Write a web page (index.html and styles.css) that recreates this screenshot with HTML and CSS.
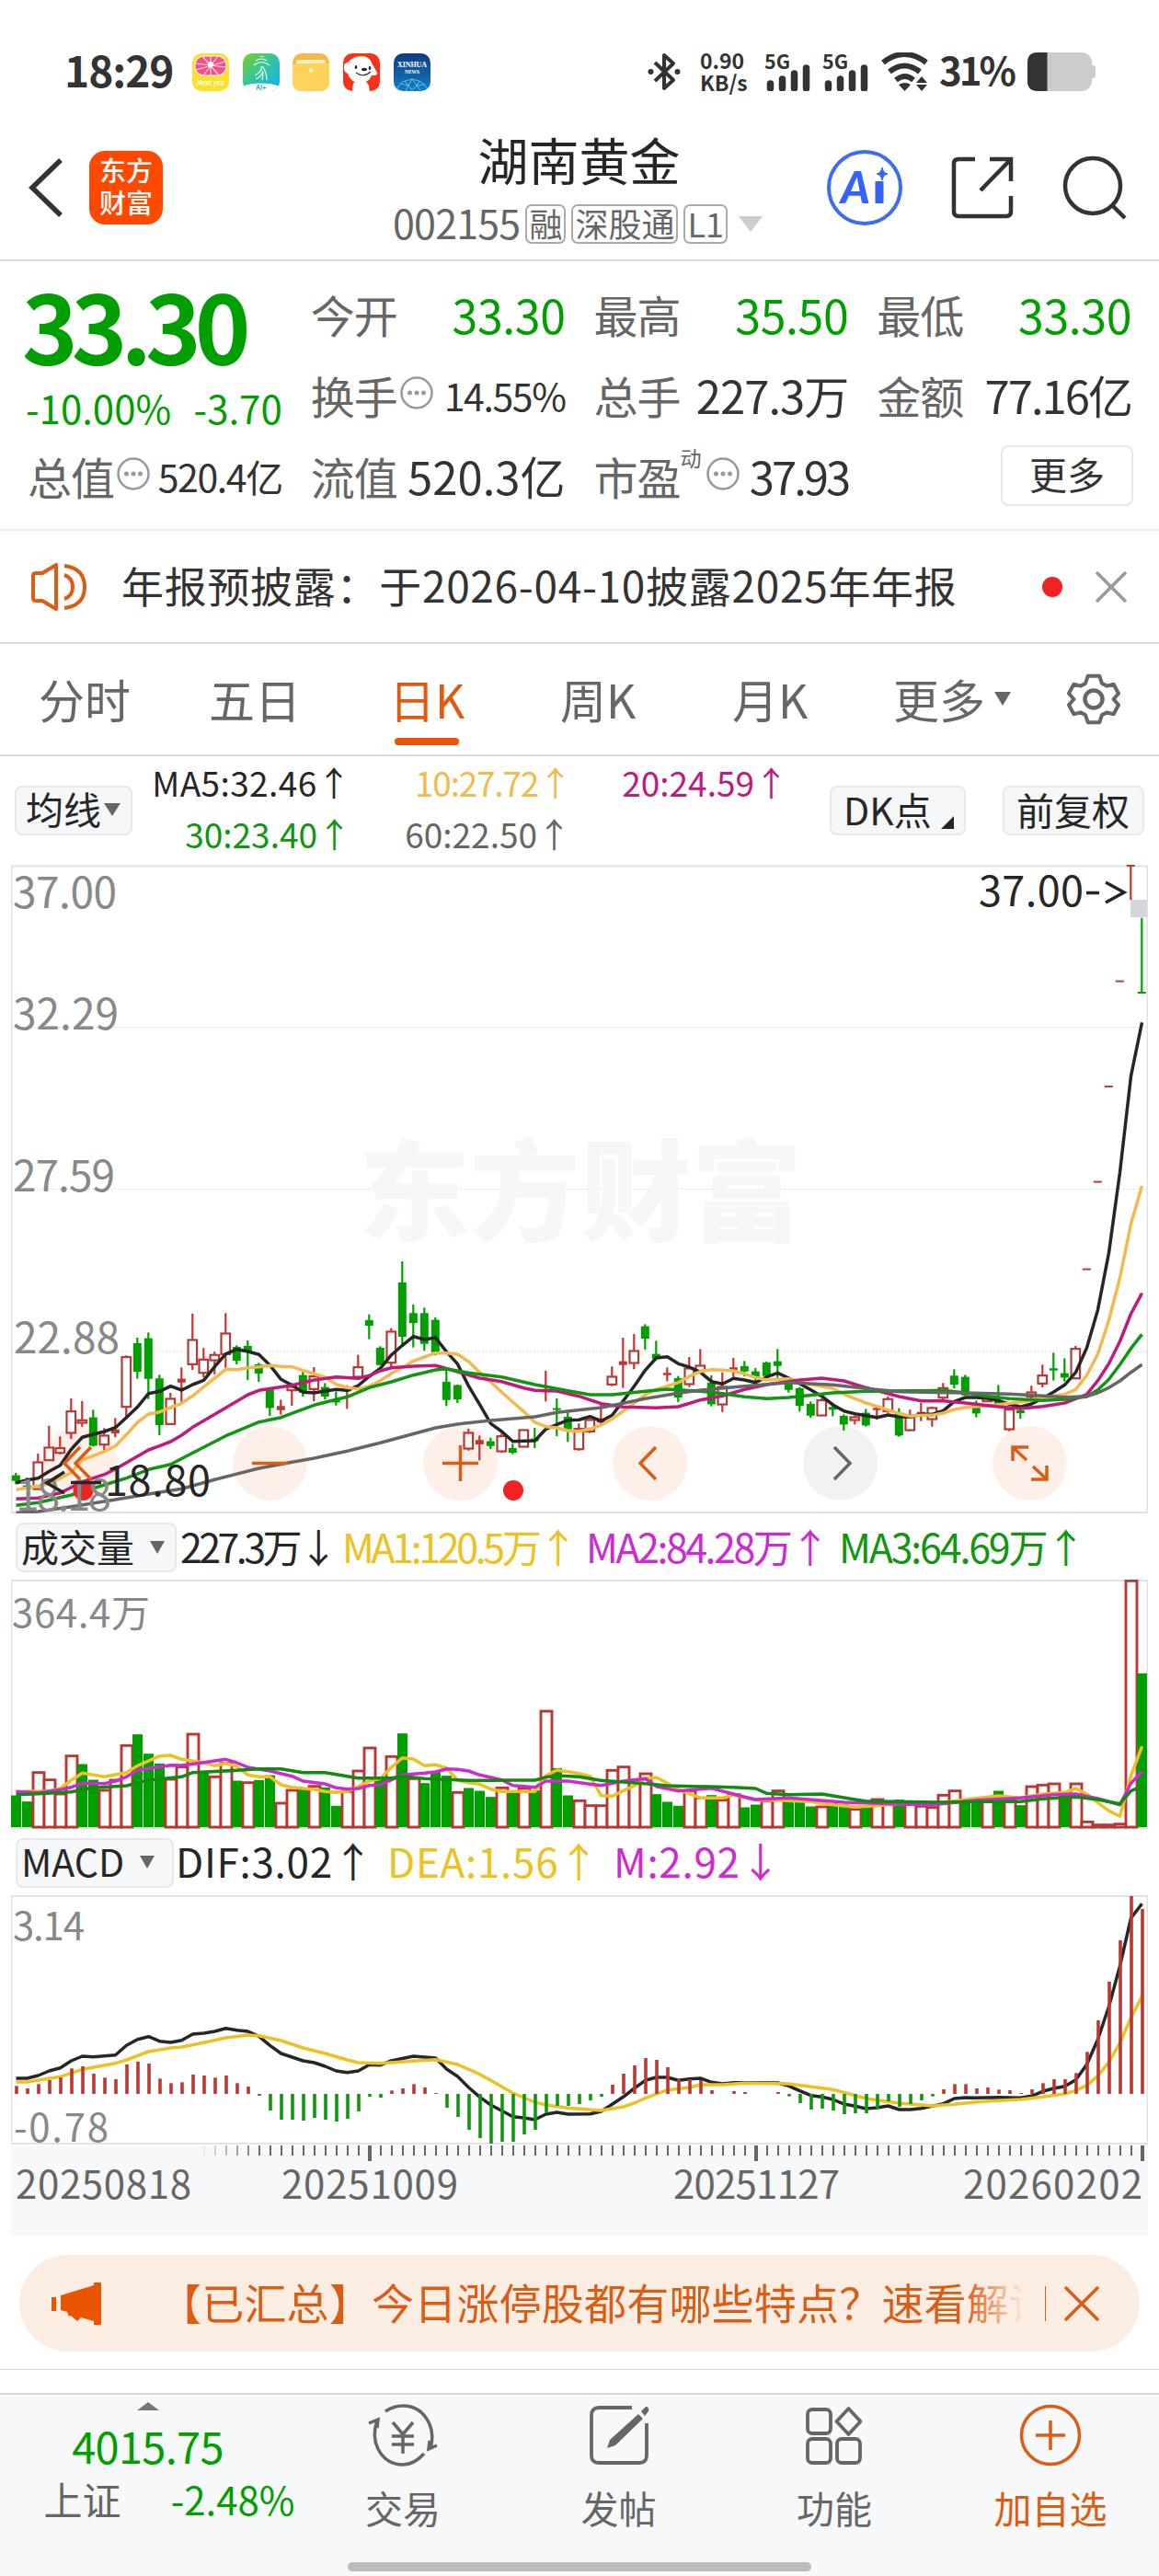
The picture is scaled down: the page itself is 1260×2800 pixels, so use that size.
FILE: index.html
```html
<!DOCTYPE html>
<html lang="zh-CN">
  <head>
    <meta charset="UTF-8" />
    <meta name="viewport" content="width=device-width, initial-scale=1" />
    <title>湖南黄金 002155</title>
    <link rel="stylesheet" href="styles.css">
    <script src="main.js" defer></script>
  </head>
  <body>
    <div class="status">
      <span class="clock">18:29</span>
      <div class="apps">
        <svg viewBox="0 0 40 41"><rect width="40" height="41" rx="10" fill="#fde02a"/><rect x="2.500" y="2.500" width="35" height="22" rx="10" fill="#fff"/><rect x="3.500" y="3.500" width="33" height="20" rx="9" fill="#f4508a"/><path d="M20 3v21M4 11l32 4M36 9L4 18M11 3l18 21M28 3L12 24" stroke="#fbd6e2" stroke-width="1.200"/><circle cx="20" cy="12" r="3" fill="#fff"/><text x="5" y="34.500" font-size="7.500" font-weight="500" fill="#fff" textLength="30" lengthAdjust="spacingAndGlyphs">Meet you</text></svg>
        <svg viewBox="0 0 40 41"><defs><linearGradient id="g1" x1="0" y1="0" x2="1" y2="1"><stop offset="0" stop-color="#7ccd2c"/><stop offset=".5" stop-color="#34c3a4"/><stop offset="1" stop-color="#0db1f2"/></linearGradient><clipPath id="c1"><rect width="40" height="41" rx="10"/></clipPath></defs><g clip-path="url(#c1)"><rect width="40" height="41" fill="url(#g1)"/><path d="M19 3.500h4M14 8q6-4 12 0M12 13q8-7 17 0M13 24q8-4 7-9 1-1 2 0 4 6 4 14M14 28q6-2 8-9M22 21q0 4-1 8" fill="none" stroke="#e2fff0" stroke-width="1.200"/><ellipse cx="20" cy="40" rx="24" ry="7.500" fill="#fff"/></g><text x="20" y="39.500" font-size="7.500" font-weight="500" fill="#0a97bd" text-anchor="middle">AI+</text></svg>
        <svg viewBox="0 0 40 41"><rect width="40" height="41" rx="10" fill="#f4ba45"/><path d="M4 13V10q0-3 3-3h26q3 0 3 3v3z" fill="#fdf0c8"/><path d="M0 11h40v20q0 10-10 10H10Q0 41 0 31z" fill="#ffd35a"/><circle cx="20" cy="18.500" r="2.200" fill="#fff5c8"/></svg>
        <svg viewBox="0 0 40 41"><rect width="40" height="41" rx="10" fill="#f83216"/><path d="M1 13q1-3 4-3 6-7 15-7 9 0 12 9l5 9q0 3-3 3h-3q-3 8-12 8-11 0-14-10-5-2-4-9z" fill="#fff"/><path d="M10 41q0-9 3-10h12q3 2 4 10z" fill="#fff"/><ellipse cx="14" cy="15" rx="1.300" ry="2" fill="#222"/><ellipse cx="29" cy="16" rx="1.300" ry="2" fill="#222"/><ellipse cx="23" cy="17.500" rx="3" ry="1.700" fill="#222"/><path d="M14 21q8 6 16-1" fill="none" stroke="#333" stroke-width="1.100"/></svg>
        <svg viewBox="0 0 40 41"><defs><linearGradient id="g2" x1="0" y1="0" x2="0" y2="1"><stop offset="0" stop-color="#123a80"/><stop offset="1" stop-color="#0f7fc4"/></linearGradient></defs><rect width="40" height="41" rx="10" fill="url(#g2)"/><text class="serif" x="4" y="15" font-size="8" font-weight="700" fill="#fff" textLength="32">XINHUA</text><text class="serif" x="12" y="22" font-size="5.500" font-weight="700" fill="#fff" textLength="16">NEWS</text><path d="M3 40q3-8 9-10l8-2 8 2q6 3 9 9M8 33l8 2 4-7 5 7 8-1M12 30l4 5-3 6M28 30l-3 5 4 5M16 35l4 5 5-5" fill="none" stroke="#7fd0f5" stroke-width=".8"/></svg>
      </div>
      <div class="signals">
        <svg class="bt" viewBox="0 0 36 42"><path d="M8 11l20 19-10 9V3l10 9L8 31" fill="none" stroke="#333" stroke-width="4" stroke-linejoin="round"/><circle cx="3.500" cy="21" r="3" fill="#333"/><circle cx="32.500" cy="21" r="3" fill="#333"/></svg>
        <div class="rate"><span>0.90</span><span>KB/s</span></div>
        <svg class="cell" viewBox="0 0 50 41"><text x="0" y="16.500" font-size="21" font-weight="700" fill="#333" textLength="28" lengthAdjust="spacingAndGlyphs">5G</text><path d="M6.500 33v5M19.500 28v10M32.500 22v16M45.500 16v22" stroke="#333" stroke-width="7.500" stroke-linecap="round"/></svg>
        <svg class="cell" viewBox="0 0 50 41"><text x="0" y="16.500" font-size="21" font-weight="700" fill="#333" textLength="28" lengthAdjust="spacingAndGlyphs">5G</text><path d="M6.500 33v5M19.500 28v10M32.500 22v16M45.500 16v22" stroke="#333" stroke-width="7.500" stroke-linecap="round"/></svg>
        <svg class="wifi" viewBox="0 0 54 42"><path d="M3 11q23-18 47 0M10 21q16-13 33 0M17 30q10-8 19 0" fill="none" stroke="#333" stroke-width="6"/><path d="M20 35q7-4 13 0l-6.500 7zM39 33l6-7 6 7zM39 35h12l-6 7z" fill="#333"/></svg>
        <span class="percent">31%</span>
        <svg class="battery" viewBox="0 0 74 42"><rect width="70" height="42" rx="11" fill="#ccc"/><path d="M70 14h1q3 0 3 3v8q0 3-3 3h-1z" fill="#ccc"/><path d="M11 0h10.500v42H11Q0 42 0 31V11Q0 0 11 0z" fill="#333"/></svg>
      </div>
    </div>

    <header class="header">
      <div class="header-left">
        <svg class="back" viewBox="0 0 38 64"><path d="M35 2L4 32l31 30" fill="none" stroke="#333" stroke-width="5.500"/></svg>
        <div class="logo">东方<br />财富</div>
      </div>
      <div class="header-title">
        <h1>湖南黄金</h1>
        <div class="code"><span>002155</span><i>融</i><i>深股通</i><i>L1</i><b></b></div>
      </div>
      <div class="header-right">
        <svg width="82" height="84" viewBox="0 0 82 84"><circle cx="41" cy="42" r="39" fill="#fff" stroke="#3d6cf0" stroke-width="4"/><text class="ai" x="15" y="59" font-size="48" fill="#3264fa" textLength="32" lengthAdjust="spacingAndGlyphs">A</text><path d="M57 35v24" stroke="#3264fa" stroke-width="9"/><path d="M60 20q1 6 6 7-5 1-6 7-1-6-6-7 5-1 6-7z" fill="#3264fa" stroke="#3264fa"/></svg>
        <svg width="68" height="68" viewBox="0 0 68 68"><path d="M26 3H8Q3 3 3 8v52q0 5 5 5h52q5 0 5-5V43M42 3h23v24M65 3L32 37" fill="none" stroke="#333" stroke-width="4.500"/></svg>
        <svg width="70" height="70" viewBox="0 0 70 70"><circle cx="33" cy="33" r="30" fill="none" stroke="#333" stroke-width="4.500"/><path d="M54 54l14 14" stroke="#333" stroke-width="4.500"/></svg>
      </div>
    </header>

    <section class="quote">
      <div class="price">
        <strong>33.30</strong>
        <p><span>-10.00%</span><span>-3.70</span></p>
      </div>
      <div class="cell-q"><label>今开</label><span class="down">33.30</span></div>
      <div class="cell-q"><label>最高</label><span class="down">35.50</span></div>
      <div class="cell-q"><label>最低</label><span class="down">33.30</span></div>
      <div class="cell-q"><label>换手<svg class="more-dot" viewBox="0 0 36 36"><use href="#dots"/></svg></label><span class="small">14.55%</span></div>
      <div class="cell-q"><label>总手</label><span>227.3万</span></div>
      <div class="cell-q"><label>金额</label><span class="amount">77.16亿</span></div>
      <div class="cell-q"><label>总值<svg class="more-dot" viewBox="0 0 36 36"><use href="#dots"/></svg></label><span class="small">520.4亿</span></div>
      <div class="cell-q"><label>流值</label><span class="wide">520.3亿</span></div>
      <div class="cell-q"><label>市盈<sup>动</sup><svg class="more-dot" viewBox="0 0 36 36"><use href="#dots"/></svg></label><span class="ratio">37.93</span></div>
      <div class="cell-q end"><a class="more">更多</a></div>
    </section>

    <section class="notice">
      <svg class="speaker" viewBox="0 0 62 52"><path d="M27 2v48L12 41H5q-3 0-3-3V14q0-3 3-3h7z" fill="none" stroke="#dc5c14" stroke-width="4" stroke-linejoin="round"/><path d="M36 13q9 3 9 13t-9 13M36 3q22 3 22 23T36 49" fill="none" stroke="#dc5c14" stroke-width="4"/></svg>
      <p>年报预披露：于2026-04-10披露2025年年报</p>
      <i class="dot"></i>
      <svg class="close" viewBox="0 0 34 34"><path d="M1 1l32 32M33 1L1 33" stroke="#999" stroke-width="3.500"/></svg>
    </section>

    <nav class="tabs">
      <a>分时</a>
      <a>五日</a>
      <a class="active">日K</a>
      <a>周K</a>
      <a>月K</a>
      <a>更多<b></b></a>
      <svg class="gear" viewBox="0 0 60 60"><path d="M23 2h14l3 9 6 3 8-2 6 11-6 7 6 7-6 11-8-2-6 3-3 9H23l-3-9-6-3-8 2-6-11 6-7-6-7 6-11 8 2 6-3z" transform="translate(3 3) scale(.9)" fill="none" stroke="#666" stroke-width="4.500" stroke-linejoin="round"/><circle cx="30" cy="30" r="9.500" fill="none" stroke="#666" stroke-width="4.500"/></svg>
    </nav>

    <section class="ma">
      <a class="chip ma-chip">均线<b></b></a>
      <div class="ma-values">
        <span class="c-dark ma5">MA5:32.46↑</span><span class="c-orange ma10">10:27.72↑</span><span class="c-pink">20:24.59↑</span>
        <span class="c-green">30:23.40↑</span><span class="c-gray">60:22.50↑</span>
      </div>
      <a class="chip dk-chip">DK点<b></b></a>
      <a class="chip fq-chip">前复权</a>
    </section>

    <svg class="chart kline" viewBox="12 940 1236 705">
      <g class="frame">
        <path d="M12.500 941.500H1247.500V1644H12.500z" />
        <path class="dash" d="M12 1116.500H1247M12 1292.500H1247M12 1469H1247" />
      </g>
      <text class="watermark" x="390" y="1340" textLength="482" lengthAdjust="spacingAndGlyphs">东方财富</text>
      <g class="buttons">
        <circle cx="87.500" cy="1590.500" r="40.500"/><circle cx="293.500" cy="1590.500" r="40.500"/><circle cx="500.500" cy="1590.500" r="40.500"/><circle cx="706.500" cy="1590.500" r="40.500"/><circle class="off" cx="913.500" cy="1590.500" r="40.500"/><circle cx="1119.500" cy="1590.500" r="40.500"/>
      </g>
      <g id="kline"></g>
      <g class="button-icons">
        <path d="M87 1573l-17 17.500 17 17.500M99 1573l-17 17.500 17 17.500M274 1590.500h39M481 1590.500h39M500.500 1571v39M713 1573l-17 17.500 17 17.500"/>
        <path class="off" d="M907 1573l17 17.500-17 17.500"/>
        <path d="M1101 1588v-15h17M1102 1574l14 13M1138 1593v15h-17M1137 1607l-14-13"/>
      </g>
      <circle cx="90.500" cy="1620" r="11" fill="#f02222"/>
      <circle cx="558" cy="1620" r="11" fill="#f02222"/>
      <rect x="1229" y="978" width="18" height="19" fill="#d3d6da"/>
      <g class="axis">
        <text x="14" y="987" textLength="113">37.00</text>
        <text x="14" y="1119" textLength="115">32.29</text>
        <text x="14" y="1295" textLength="111">27.59</text>
        <text x="15" y="1471" textLength="115">22.88</text>
        <text x="17" y="1642" textLength="104">18.18</text>
      </g>
      <path d="M70 1600l-19 12 19 11M77 1611.500h33" fill="none" stroke="#262626" stroke-width="3.500"/>
      <text class="mark" x="114" y="1626" textLength="115">18.80</text>
      <text class="mark" x="1064" y="985" textLength="114">37.00</text>
      <path d="M1181 970.500h14M1202 959l20 11-20 11" fill="none" stroke="#262626" stroke-width="3.500"/>
    </svg>

    <section class="indicator volume-row">
      <a class="chip">成交量<b></b></a>
      <span class="c-dark">227.3万↓</span><span class="c-yellow">MA1:120.5万↑</span><span class="c-magenta">MA2:84.28万↑</span><span class="c-green">MA3:64.69万↑</span>
    </section>

    <svg class="chart volume" viewBox="12 1717 1236 271">
      <g class="frame"><path d="M12.500 1718H1247.500V1987H12.500z" /></g>
      <g id="volume"></g>
      <g class="axis"><text x="13" y="1769" font-size="42" textLength="150">364.4万</text></g>
    </svg>

    <section class="indicator macd-row">
      <a class="chip">MACD<b></b></a>
      <span class="c-dark">DIF:3.02↑</span><span class="c-yellow">DEA:1.56↑</span><span class="c-magenta">M:2.92↓</span>
    </section>

    <svg class="chart macd" viewBox="12 2060 1236 370">
      <rect x="12" y="2332" width="1236" height="98" fill="#f7f8fa" />
      <g class="frame"><path d="M12.500 2061H1247.500V2330H12.500z" /></g>
      <g id="macd"></g>
      <g class="axis">
        <text x="14" y="2109" font-size="42" textLength="78">3.14</text>
        <text x="15" y="2328" font-size="42" textLength="103">-0.78</text>
      </g>
      <g class="dates">
        <text x="17" y="2390" textLength="191">20250818</text>
        <text x="306" y="2390" textLength="192">20251009</text>
        <text x="732" y="2390" textLength="181">20251127</text>
        <text x="1047" y="2390" textLength="195">20260202</text>
      </g>
    </svg>

    <div class="banner">
      <svg class="horn" viewBox="0 0 54 46"><path d="M0 16h5v15H0zM10 14L46 3V0h8v46h-8v-4l-14-4-4 4-7-6-2 1-2-5-7-2z" fill="#ea5504"/></svg>
      <p>【已汇总】今日涨停股都有哪些特点？速看解读</p>
      <svg class="banner-close" viewBox="0 0 38 38"><path d="M1 1l36 36M37 1L1 37" stroke="#dc5c14" stroke-width="3.500"/></svg>
    </div>

    <footer class="bottom">
      <div class="index">
        <b></b>
        <strong>4015.75</strong>
        <p><span>上证</span><em>-2.48%</em></p>
      </div>
      <a><svg viewBox="0 0 76 68"><g fill="none" stroke="#666" stroke-width="3.500"><path d="M19 8Q28 2 38 2q20 0 29 20 5 12 1 27M61 54Q50 66 38 66 20 66 11 49 4 35 10 18M1 21l10-4-1 9M67 40l-1 9 9-4M27 20l11 13 11-13M26 35h24M26 44h24M38 33v21"/></g></svg>交易</a>
      <a><svg viewBox="0 0 68 68"><g fill="none" stroke="#666" stroke-width="3.800"><path d="M48 4H12q-8 0-8 8v44q0 8 8 8h44q8 0 8-8V21"/></g><path d="M55 11l5 5-30 29-9 3 3-9zM58 8l5-5q4 0 3 5l-4 5z" fill="#666"/></svg>发帖</a>
      <a><svg viewBox="0 0 66 68"><g fill="none" stroke="#666" stroke-width="3.800"><rect x="4" y="6" width="25" height="26" rx="5"/><rect x="4" y="38" width="25" height="26" rx="5"/><rect x="36" y="38" width="25" height="26" rx="5"/><path d="M48.500 5l13 14-13 14-13-14z" stroke-linejoin="round"/></g></svg>功能</a>
      <a class="add"><svg viewBox="0 0 68 68"><g fill="none" stroke="#dc5c14" stroke-width="3.500"><circle cx="34" cy="34" r="31.500"/><path d="M18 34h32M34 18v32"/></g></svg>加自选</a>
      <i class="home"></i>
    </footer>

    <svg class="defs">
      <symbol id="dots" viewBox="0 0 36 36"><circle cx="18" cy="18" r="16.500" fill="none" stroke="#999" stroke-width="2.500"/><circle cx="10.500" cy="18" r="2.500" fill="#999"/><circle cx="18" cy="18" r="2.500" fill="#999"/><circle cx="25.500" cy="18" r="2.500" fill="#999"/></symbol>
    </svg>
  </body>
</html>
```
FILE: styles.css
```css
* {
  box-sizing: border-box;
}
body {
  margin: 0;
  width: 1260px;
  background: #fff;
  color: #333;
  font-family: "Noto Sans CJK SC", "Noto Sans", sans-serif;
}
svg {
  display: block;
}
p, h1 {
  margin: 0;
  font-weight: 400;
}
i, em {
  font-style: normal;
}
.serif {
  font-family: "Liberation Serif", serif;
}
.defs {
  width: 0;
  height: 0;
}

/* status bar */
.status {
  display: flex;
  align-items: center;
  height: 126px;
  padding: 30px 69px 0 70px;
}
.clock {
  width: 139px;
  font-size: 46px;
  font-weight: 700;
  line-height: 90px;
  letter-spacing: -1px;
  margin-top: -6px;
}
.apps {
  display: flex;
  gap: 14.7px;
}
.apps svg {
  width: 40px;
  height: 41px;
}
.signals {
  display: flex;
  align-items: center;
  margin-left: auto;
}
.bt {
  width: 36px;
  height: 42px;
}
.rate {
  display: flex;
  flex-direction: column;
  width: 54px;
  margin: -3px 16px 0 21px;
  font-size: 23px;
  font-weight: 700;
  line-height: 24px;
}
.cell {
  width: 50px;
  height: 41px;
  margin-right: 13px;
}
.wifi {
  width: 54px;
  height: 42px;
}
.percent {
  width: 83px;
  margin: -6px 13px 0 10px;
  font-size: 42px;
  font-weight: 700;
  line-height: 80px;
  letter-spacing: -3px;
}
.battery {
  width: 74px;
  height: 42px;
}

/* title bar */
.header {
  display: grid;
  grid-template-columns: 378px 500px 382px;
  height: 158px;
  border-bottom: 2px solid #ddd;
}
.header-left {
  display: flex;
  align-items: center;
  gap: 28px;
  padding-left: 31px;
}
.back {
  width: 38px;
  height: 64px;
}
.logo {
  width: 80px;
  height: 80px;
  padding-top: 3px;
  border-radius: 17px;
  background: #ff4800;
  color: #fff;
  font-size: 29px;
  font-weight: 500;
  line-height: 35px;
  text-align: center;
}
.header-title {
  text-align: center;
}
.header-title h1 {
  padding: 12px 0 0 3px;
  font-size: 55px;
  line-height: 68px;
  color: #262626;
}
.code {
  display: flex;
  align-items: center;
  justify-content: center;
  gap: 6px;
  height: 72px;
  margin-top: 1px;
  color: #666;
}
.code span {
  margin-top: -4px;
  font-size: 43px;
  line-height: 50px;
  letter-spacing: -0.8px;
}
.code i {
  height: 43px;
  padding: 0 2px;
  border: 2px solid #aaa;
  border-radius: 7px;
  font-size: 36px;
  line-height: 36px;
}
.code b {
  margin-left: 6px;
  border: 13px solid transparent;
  border-top: 17px solid #ccc;
  border-bottom: 0;
}
.header-right {
  display: flex;
  align-items: center;
  justify-content: flex-end;
  gap: 53px;
  padding-right: 35px;
}
.ai {
  font-family: Lato, sans-serif;
  font-weight: 900;
  font-style: italic;
}

/* quote */
.quote {
  display: grid;
  grid-template-columns: repeat(4, 1fr);
  grid-template-rows: 88px 88px 88px;
  column-gap: 31px;
  height: 293px;
  padding: 13px 30px 0;
  border-bottom: 2px solid #eee;
}
.price {
  grid-row: span 2;
  color: #009f00;
}
.price strong {
  display: block;
  font-size: 103px;
  line-height: 112px;
  letter-spacing: -7px;
  margin-left: -6px;
}
.price p {
  display: flex;
  justify-content: space-between;
  margin-left: -2px;
  font-size: 42px;
  line-height: 68px;
}
.cell-q {
  display: flex;
  align-items: center;
  justify-content: space-between;
  white-space: nowrap;
  font-size: 49px;
  line-height: 80px;
  letter-spacing: -1px;
}
.cell-q.end {
  justify-content: flex-end;
}
.cell-q label {
  display: flex;
  align-items: center;
  color: #666;
  font-size: 48px;
}
.cell-q .small {
  font-size: 41px;
  letter-spacing: -1.4px;
}
.cell-q .amount {
  letter-spacing: -2px;
}
.cell-q .wide {
  letter-spacing: 0;
}
.cell-q .ratio {
  letter-spacing: -3px;
}
.cell-q .down {
  font-size: 50px;
  letter-spacing: -0.4px;
  color: #009f00;
}
.more-dot {
  width: 36px;
  height: 36px;
  margin: -4px 0 0 3px;
}
.cell-q sup {
  align-self: flex-start;
  margin-top: -20px;
  width: 25px;
  font-size: 23px;
}
.more {
  width: 144px;
  height: 66px;
  margin: -1px -2px 0 0;
  border: 2px solid #e8e8e8;
  border-radius: 8px;
  font-size: 41px;
  line-height: 56px;
  letter-spacing: 0;
  text-align: center;
}

/* notice */
.notice {
  display: flex;
  align-items: center;
  height: 123px;
  padding: 0 35px 0 34px;
  border-bottom: 2px solid #ddd;
}
.speaker {
  width: 62px;
  height: 52px;
}
.notice p {
  width: 1001px;
  margin: -6px 0 0 36px;
  font-size: 46px;
  line-height: 70px;
  letter-spacing: 0.7px;
  white-space: nowrap;
}
.dot {
  width: 22px;
  height: 22px;
  border-radius: 50%;
  background: #f02222;
}
.notice .close {
  width: 34px;
  height: 34px;
  margin-left: 36px;
}

/* tabs */
.tabs {
  display: grid;
  grid-template-columns: 185px 195px 187px 187px 175px 184px 95px;
  align-items: center;
  height: 122px;
  padding-left: 42px;
  border-bottom: 2px solid #ddd;
  color: #666;
  font-size: 50px;
}
.tabs a {
  position: relative;
  width: max-content;
  line-height: 70px;
  margin-top: -3px;
}
.tabs .active {
  margin-left: 1px;
  color: #dc5c14;
}
.tabs .active::after {
  content: "";
  position: absolute;
  left: 6px;
  bottom: -16px;
  width: 70px;
  height: 8px;
  border-radius: 4px;
  background: #ea5504;
}
.tabs b {
  display: inline-block;
  margin: 0 0 14px 10px;
  border: 9px solid transparent;
  border-top: 15px solid #666;
  border-bottom: 0;
}
.gear {
  width: 60px;
  height: 60px;
  margin: -1px 0 0 4px;
}

/* moving averages */
.ma {
  display: flex;
  align-items: center;
  height: 118px;
  padding: 0 16px;
}
.chip {
  flex: none;
  display: flex;
  align-items: center;
  height: 54px;
  padding: 0 4px 5px;
  border: 2px solid #e6e8eb;
  border-radius: 8px;
  background: #f6f7f9;
  color: #262626;
  font-size: 41px;
  line-height: 44px;
}
.chip b {
  border: 8px solid transparent;
  border-top: 14px solid #666;
  border-bottom: 0;
}
.ma-chip {
  width: 128px;
  padding-left: 10px;
  margin-top: -1px;
}
.ma-chip b {
  border-width: 14px 9px 0;
  margin: 3px 0 0 3px;
}
.ma-values {
  display: grid;
  grid-template-columns: 238px 239px 236px;
  grid-template-rows: 56px 56px;
  width: 713px;
  font-size: 37px;
  line-height: 50px;
  text-align: right;
  white-space: nowrap;
}
.ma-values .ma5 {
  letter-spacing: 0.4px;
}
.ma-values .ma10 {
  letter-spacing: -1.2px;
}
.dk-chip {
  width: 148px;
  margin-left: 45px;
  padding-left: 13px;
}
.dk-chip b {
  align-self: flex-end;
  margin-left: 10px;
  margin-bottom: 0;
  border: 7px solid #262626;
  border-top-color: transparent;
  border-left-color: transparent;
}
.fq-chip {
  width: 154px;
  margin-left: 40px;
  padding-left: 13px;
}
.c-dark { color: #262626; }
.c-orange { color: #f2b94e; }
.c-pink { color: #bf1a7c; }
.c-green { color: #109610; }
.c-gray { color: #666; }
.c-yellow { color: #ecc122; }
.c-magenta { color: #cc2bcf; }

/* charts */
.chart {
  width: 1236px;
  margin-left: 12px;
}
.kline { height: 705px; }
.volume { height: 271px; }
.macd { height: 370px; }
.frame path {
  fill: none;
  stroke: #e2e2e2;
  stroke-width: 2;
}
.frame .dash {
  stroke: #dedede;
  stroke-width: 1.2;
  stroke-dasharray: 2 2;
}
.watermark {
  fill: #f7f7f7;
  font-size: 119px;
  font-weight: 900;
}
.axis {
  fill: #888;
  font-size: 46px;
}
.mark {
  fill: #262626;
  font-size: 45px;
}
.dates {
  fill: #666;
  font-size: 42px;
}
.buttons circle {
  fill: #fef0e8;
}
.buttons .off {
  fill: #f2f2f2;
}
.button-icons path {
  fill: none;
  stroke: #dc5c14;
  stroke-width: 3.5;
}
.button-icons .off {
  stroke: #666;
}
.line {
  fill: none;
  stroke-width: 3.5;
  stroke-linejoin: round;
}

/* indicator rows */
.indicator {
  display: grid;
  align-items: center;
  padding-left: 17px;
  white-space: nowrap;
  font-size: 44px;
  line-height: 60px;
}
.indicator span {
  margin-top: -5px;
}
.volume-row {
  grid-template-columns: 179px 176px 265px 275px 300px;
  height: 72px;
  padding-top: 2px;
  font-size: 43px;
}
.volume-row .chip {
  width: 175px;
}
.volume-row .c-dark { letter-spacing: -3.6px; }
.volume-row .c-yellow { letter-spacing: -3.4px; }
.volume-row .c-magenta { letter-spacing: -2.5px; }
.volume-row .c-green { letter-spacing: -2.2px; }
.volume-row .chip b, .macd-row .chip b {
  margin: 4px 0 0 17px;
}
.macd-row {
  grid-template-columns: 174px 230px 246px 250px;
  height: 72px;
  padding-top: 1px;
}
.macd-row .chip {
  width: 172px;
}
.macd-row span {
  letter-spacing: 0.7px;
}

/* banner */
.banner {
  display: flex;
  align-items: center;
  width: 1218px;
  height: 105px;
  margin: 21px 21px 20px;
  padding: 0 44px 0 35px;
  border-radius: 53px;
  background: #fcede3;
  color: #dc5c14;
}
.horn {
  width: 54px;
  height: 46px;
}
.banner p {
  width: 942px;
  margin: -6px 0 0 63px;
  overflow: hidden;
  font-size: 46px;
  line-height: 66px;
  letter-spacing: 0.2px;
  white-space: nowrap;
  -webkit-mask-image: linear-gradient(90deg, #000 875px, transparent 941px);
  mask-image: linear-gradient(90deg, #000 875px, transparent 941px);
}
.banner-close {
  box-sizing: content-box;
  width: 38px;
  height: 38px;
  margin-left: auto;
  padding-left: 20px;
  border-left: 1.5px solid #dc5c14;
}

/* bottom bar */
.bottom {
  display: grid;
  grid-template-columns: 321px 234px 235px 234px 236px;
  grid-template-rows: 184px 15px;
  height: 224px;
  border-top: 25px solid #fff;
  background: #f7f8fa;
  box-shadow: inset 0 2px #d8d8d8, 0 -1px #d8d8d8;
}
.bottom a {
  display: flex;
  flex-direction: column;
  align-items: center;
  padding-top: 12px;
  color: #666;
  font-size: 41px;
  line-height: 88px;
}
.bottom a svg {
  height: 68px;
}
.bottom .add {
  color: #dc5c14;
}
.index {
  display: flex;
  flex-direction: column;
  align-items: center;
  color: #009f00;
}
.index b {
  margin-top: 10px;
  border: 12px solid transparent;
  border-bottom: 9px solid #777;
  border-top: 0;
}
.index strong {
  margin-top: 6px;
  font-size: 47px;
  font-weight: 400;
  line-height: 64px;
  letter-spacing: -0.7px;
}
.index p {
  display: flex;
  justify-content: space-between;
  width: 273px;
  margin: 1px 0 0 47px;
  font-size: 42px;
  line-height: 50px;
  color: #666;
}
.index em {
  color: #009f00;
}
.home {
  grid-column: 1 / -1;
  justify-self: center;
  width: 504px;
  height: 10px;
  border-radius: 5px;
  background: #bbbcbe;
}
```
FILE: main.js
```js
const RED = "#bb3733";
const GREEN = "#009f00";
const STEP = 12;
const X0 = 17;

const x = (i) => X0 + i * STEP;

function el(parent, name, attrs) {
  const node = document.createElementNS("http://www.w3.org/2000/svg", name);
  for (const key in attrs) node.setAttribute(key, attrs[key]);
  parent.appendChild(node);
  return node;
}

// pts is a flat list: index, value, index, value...
function line(parent, pts, y, color) {
  const out = [];
  for (let i = 0; i < pts.length; i += 2) {
    out.push(x(pts[i]) + 0.5 + "," + y(pts[i + 1]).toFixed(1));
  }
  el(parent, "polyline", { class: "line", points: out.join(" "), stroke: color });
}

const dense = (list) => list.flatMap((v, i) => [i, v]);

/* ---------- K line ---------- */
// type, body top, body bottom, high, low
const candles = `g792,808,783,820 g825,835,798,836 r746,838,720,838 r698,744,629,744 r700,720,664,722
r580,655,540,673 r609,622,549,632 g603,693,577,697 r659,693,637,718 r642,653,604,667
r403,570,400,605 g361,452,342,476 g345,475,325,542 g476,626,463,660 r539,626,522,626
r477,487,439,553 r347,431,263,447 r411,459,376,472 r396,418,388,462 r326,398,262,440
g373,416,367,429 g370,384,351,480 g430,458,424,486 g512,570,508,597 r566,577,544,593
r500,516,490,564 g465,520,450,534 r466,512,438,550 g504,533,490,543 g545,552,518,563
r512,516,497,574 r436,472,398,472 g286,302,266,347 g376,430,370,432 r320,426,311,440
g163,338,93,372 g263,293,234,374 g263,361,244,385 g285,388,276,400 g487,544,447,565
g498,542,495,555 r650,706,639,710 r677,689,661,742 g681,694,668,705 r661,715,655,718
g703,716,688,722 r641,700,641,700 g672,678,636,702 r515,517,450,550 g573,576,540,663
g601,640,586,682 r637,708,622,710 r608,650,606,653 r606,618,560,622 r467,497,436,500
r420,430,342,506 r383,427,330,445 g306,344,298,381 g396,410,352,415 r458,463,439,484
g475,536,467,552 r440,496,405,503 r431,452,379,452 g490,558,465,566 r500,562,455,584
r440,446,408,470 g436,451,418,468 g453,470,441,485 g424,466,420,466 g420,433,379,478
g492,511,471,521 g508,563,503,583 g559,595,550,603 r544,598,540,598 g569,576,554,598
g598,624,592,645 r599,613,596,625 g588,627,574,632 r572,577,561,609 r540,584,533,587
g588,660,572,665 r599,646,577,647 r585,592,555,614 r569,610,566,632 r504,540,490,543
g467,494,445,507 g471,529,463,530 g556,588,547,602 r533,552,533,552 g547,560,496,565
r574,643,572,647 g580,587,567,606 r518,537,499,547 r463,494,430,504 g443,448,391,482
g459,471,409,485 r376,477,369,478 r117,119,117,119 r-168,-166,-168,-166 r-479,-477,-479,-477
r-822,-820,-822,-820 r-1199,-1197,-1199,-1085 g-785,-783,-1027,-783`.split(/\s+/);

const ky = (v) => 1340 + v / 3;
const kline = document.getElementById("kline");

candles.forEach((c, i) => {
  const [top, bottom, high, low] = c.slice(1).split(",").map((v) => ky(+v));
  const up = c[0] === "r";
  const color = up ? RED : GREEN;
  const cx = x(i) + 0.3;
  const h = bottom - top;
  if (up && h > 4) {
    el(kline, "path", {
      d: `M${cx} ${high}V${top}M${cx} ${bottom}V${low}`,
      stroke: color,
      "stroke-width": 2.2,
    });
    el(kline, "rect", { x: cx - 4.8, y: top + 0.8, width: 9.6, height: h - 1.6, fill: "#fff", "fill-opacity": 0.4, stroke: color, "stroke-width": 2.2 });
  } else {
    el(kline, "path", { d: `M${cx} ${high}V${low}`, stroke: color, "stroke-width": 2.2 });
    el(kline, "rect", { x: cx - 4.5, y: top - 0.4, width: 9, height: Math.max(h, 1.2) + 0.8, fill: color });
  }
});

const ma60 = [0,913,2,909,5,893,9,870,12,852,15,835,18,805,22,768,25,748,27,735,30,712,33,685,35,665,38,636,40,624,43,612,47,600,49,586,53,570,55,556,57,541,60,523,62,513,65,503,68,494,70,488,74,496,77,508,80,518,86,522,90,526,93,532,95,536,97,533,98,522,99,505,100,483,101,455,102,430];
const ma30 = [0,889,2,880,5,855,8,822,10,800,12,772,14,755,16,718,19,662,22,617,24,602,27,562,30,535,32,505,34,486,36,464,38,447,39,444,41,457,44,470,47,495,50,515,52,528,54,528,57,517,59,510,62,517,64,524,66,535,68,541,70,537,74,522,77,517,81,515,84,514,86,522,88,533,90,541,93,547,95,543,97,534,98,512,99,478,100,430,101,377,102,331];
const ma20 = [0,868,2,865,4,848,6,812,8,788,9,770,12,708,13,695,14,681,15,660,16,634,18,592,21,528,22,514,25,497,27,480,29,470,31,475,32,466,33,450,34,440,36,435,38,433,40,453,42,474,44,485,46,506,47,514,49,516,51,533,53,557,55,568,58,571,60,567,62,545,64,532,66,511,68,495,71,480,73,474,75,483,77,505,80,534,82,548,84,548,86,555,89,567,91,573,93,566,95,555,97,527,98,482,99,427,100,354,101,264,102,197];
const ma10 = dense([838,832,826,818,800,782,740,727,713,695,658,618,591,584,570,556,532,502,474,445,446,440,437,433,436,437,449,460,471,494,505,509,500,482,458,440,418,405,392,392,396,420,455,487,520,552,583,618,632,636,645,647,640,627,607,582,555,528,511,500,488,468,452,446,448,450,460,472,480,478,476,486,494,501,508,526,541,555,566,578,590,598,595,595,588,576,569,566,565,560,556,552,547,538,532,527,511,464,395,285,147,-29,-153]);
const ma5 = dense([815,806,800,778,758,706,667,657,648,635,602,568,524,517,500,513,495,481,436,395,380,387,397,432,478,497,520,522,516,511,514,498,468,442,398,367,338,348,342,388,428,500,560,622,648,680,679,678,640,625,611,610,599,614,595,548,500,448,408,404,427,438,455,485,493,475,480,488,470,457,474,492,512,533,561,581,590,596,602,594,600,600,592,592,580,550,537,537,540,547,559,568,558,540,519,496,455,375,251,65,-197,-511,-686]);

line(kline, ma5, ky, "#262626");
line(kline, ma10, ky, "#f2b94e");
line(kline, ma20, ky, "#bf1a7c");
line(kline, ma30, ky, "#109610");
line(kline, ma60, ky, "#666");

/* ---------- volume ---------- */
const vols = `g936 g956 r860 r884 r930 r806 g834 g885 r918 r885 r772 g737 g800 g832 r882 r842 r735 g857 r874 r830
g888 r893 g886 g870 r960 r918 g912 r905 g910 g970 r922 r855 r780 g880 r808 g734 r880 g896 g860 g872
r925 g912 g921 g941 r910 g920 r912 g920 r660 g847 g936 r952 r968 r968 r853 r842 r885 r864 g932 g957
g970 r920 r943 g935 r950 r932 g975 g966 r953 r920 g952 g952 g972 r972 g962 g965 r980 g972 r948 r962
g950 r962 r970 r974 r934 r920 g958 g955 r955 g921 r950 g968 r906 r901 r897 g935 r897 r1021 r1031 r1031
r1028 r235 g538`.split(/\s+/);

const vy = (v) => 1640 + v / 3;
const BASE = 1986;
const volume = document.getElementById("volume");

vols.forEach((s, i) => {
  const top = vy(+s.slice(1));
  const cx = x(i) + 0.5;
  if (s[0] === "r") {
    el(volume, "rect", { x: cx - 5.5, y: top, width: 12, height: Math.max(BASE - top, 1), fill: "#fff", stroke: RED, "stroke-width": 2.9 });
  } else {
    el(volume, "rect", { x: cx - 5.5, y: top - 0.5, width: 11, height: BASE - top + 0.5, fill: GREEN });
  }
});

line(volume, [0,924,1,921,3,920,4,912,5,885,6,862,8,874,10,860,11,838,13,806,14,804,15,817,17,828,18,838,19,830,20,840,21,868,22,874,23,874,24,900,25,908,27,915,28,922,29,925,30,922,32,888,33,880,34,843,35,812,36,816,37,838,38,835,39,845,40,885,41,893,42,898,43,914,44,922,47,922,48,870,49,852,50,857,51,863,52,872,53,935,54,937,55,920,56,903,57,880,58,876,59,895,60,915,62,943,64,943,65,933,67,950,69,950,72,955,74,965,76,972,78,968,80,962,83,962,86,948,88,940,89,936,91,943,93,930,95,925,96,912,97,930,98,958,99,985,100,1003,101,870,102,775], vy, "#ecc122");
line(volume, [0,922,2,926,4,916,5,908,6,895,8,896,9,888,10,874,11,853,12,847,14,836,15,837,17,827,19,817,20,828,21,843,23,855,25,872,26,888,28,897,29,910,30,914,31,912,32,902,33,900,34,884,35,868,37,862,38,858,39,848,40,850,41,855,42,868,44,884,45,902,47,908,48,888,50,888,52,898,53,902,55,888,57,880,58,905,60,920,61,917,63,911,66,940,67,948,70,943,75,957,80,963,83,965,87,950,91,943,94,932,96,930,98,945,100,965,101,895,102,857], vy, "#cc2bcf");
line(volume, [0,932,2,929,5,923,7,910,10,903,12,885,15,874,16,860,20,853,22,848,24,848,26,860,28,860,30,872,31,878,34,878,35,872,37,880,41,886,43,886,45,885,47,885,48,875,49,870,51,874,53,886,57,896,59,903,65,908,67,912,68,928,70,932,73,930,76,948,77,953,84,957,87,955,91,955,93,946,96,940,98,948,100,962,101,920,102,905], vy, "#128a12");

/* ---------- MACD ---------- */
const my = (v) => 2050 + v / 3;
const ZERO = 678;
const macd = document.getElementById("macd");
const bars = [652,660,646,633,624,595,588,612,625,630,582,573,579,628,643,640,615,618,625,618,643,654,684,732,762,762,765,756,762,768,759,735,687,690,667,660,646,657,675,723,753,795,822,840,834,834,810,795,740,717,717,711,699,687,648,612,585,561,567,591,628,630,633,666,678,669,672,678,678,672,686,708,729,726,732,744,741,741,726,702,720,711,699,686,663,646,646,660,657,664,666,675,663,643,630,630,610,541,438,312,177,33,75];

line(macd, [0,627,1,627,2,618,3,603,4,593,5,570,6,555,7,557,9,551,10,520,11,500,12,491,13,506,14,510,15,503,16,483,17,480,18,474,19,464,20,470,21,474,22,490,23,520,24,546,26,570,27,576,28,588,29,603,30,608,31,603,32,583,33,584,34,570,36,555,38,561,39,597,40,621,41,657,42,688,43,714,44,733,45,752,46,756,47,762,48,744,49,738,50,744,52,743,53,735,54,712,55,688,56,660,57,634,58,624,59,624,60,634,61,629,62,627,63,640,64,645,65,641,69,642,70,652,71,668,72,683,73,688,74,696,75,711,76,718,77,726,78,723,79,717,80,729,81,729,82,725,84,710,85,693,86,690,87,691,89,689,91,691,92,685,93,670,94,660,95,653,96,632,97,582,98,500,99,393,100,261,101,105,102,58], my, "#262626");
line(macd, [0,639,1,639,4,622,6,598,9,578,10,567,12,540,14,528,15,525,17,511,19,495,21,486,22,488,24,504,26,528,28,546,30,567,31,576,33,578,36,571,38,566,40,582,42,614,43,634,45,675,47,705,48,714,50,724,51,727,53,732,55,720,56,708,57,692,59,665,61,657,62,648,64,648,66,643,70,645,74,664,77,693,80,708,83,717,85,712,87,704,89,700,91,696,93,688,95,678,96,667,97,650,98,620,99,574,100,512,101,430,102,360], my, "#ecc122");

bars.forEach((v, i) => {
  if (v === ZERO) return;
  el(macd, "path", {
    d: `M${x(i) + 1} ${my(ZERO)}V${my(v)}`,
    stroke: v < ZERO ? RED : "#109610",
    "stroke-width": 3.6,
  });
});

// date ruler, fades in from the left
for (let i = 17; i <= 102; i++) {
  const big = i === 32 || i === 67 || i === 102;
  el(macd, "path", {
    d: `M${x(i) + 1} 2332V${big ? 2349 : 2343}`,
    stroke: "#666",
    "stroke-width": big ? 4 : 2,
    opacity: Math.min(1, (i - 16.5) / 6),
  });
}
```
